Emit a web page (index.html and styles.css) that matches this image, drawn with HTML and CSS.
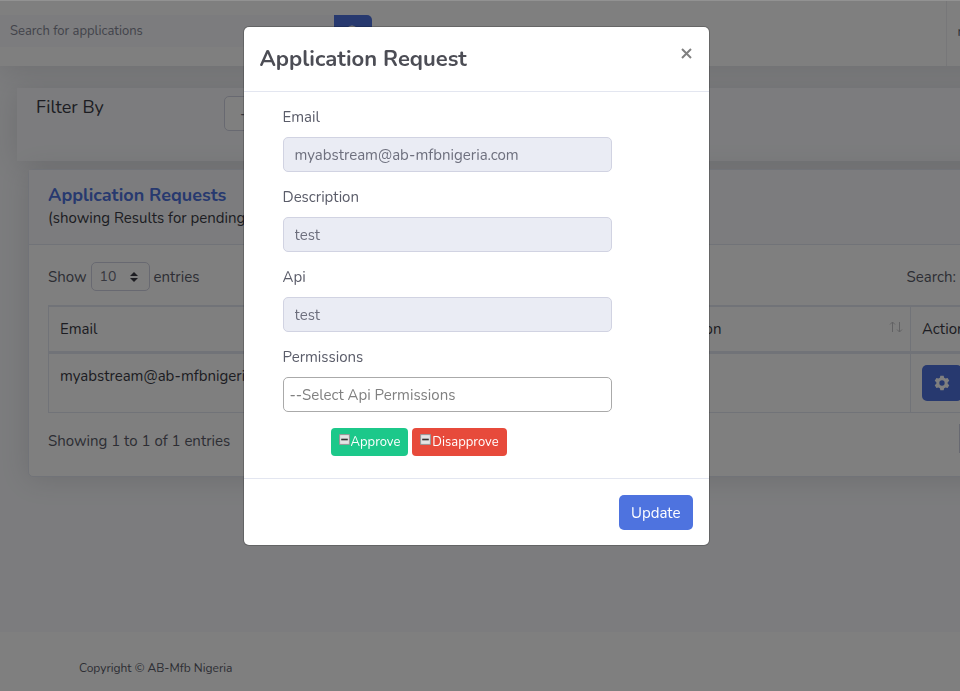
FILE: index.html
```html
<!DOCTYPE html>
<html lang="en">
<head>
<meta charset="utf-8">
<title>Application Requests</title>
<link rel="stylesheet" href="styles.css">
</head>
<body>
<div class="page">
  <header class="topbar">
    <form class="search">
      <input class="search-input" type="text" placeholder="Search for applications" aria-label="Search for applications">
      <button class="search-btn" type="button" aria-label="Search">
        <svg width="14" height="14" viewBox="0 0 14 14" fill="none" stroke="#fff" stroke-width="2" stroke-linecap="round"><circle cx="6" cy="6" r="4.5"/><path d="M9.5 9.5 13 13"/></svg>
      </button>
    </form>
    <div class="user">m</div>
  </header>
  <main class="content">
    <section class="filter">
      <h2 class="filter-title">Filter By</h2>
      <select class="filter-select" aria-label="Filter by"><option>--Select--</option></select>
    </section>
    <section class="card">
      <div class="card-head">
        <h1 class="card-title">Application Requests</h1>
        <div class="card-sub">(showing Results for pending)</div>
      </div>
      <div class="card-body">
        <div class="tools">
          <div class="length">
            <label for="len">Show</label>
            <span class="len-wrap">
              <select id="len" class="len-select"><option>10</option></select>
              <svg class="len-arrows" width="8" height="10" viewBox="0 0 8 10" fill="#3a3b45"><path d="M4 0 8 4H0zM0 6h8l-4 4z"/></svg>
            </span>
            <span>entries</span>
          </div>
          <div class="find"><label for="find">Search:</label><input id="find" class="find-input" type="search"></div>
        </div>
        <table class="table">
          <colgroup><col class="col-email"><col class="col-api"><col class="col-desc"><col></colgroup>
          <thead>
            <tr><th>Email</th><th>Api</th><th><div class="th-sort"><span>Description</span>
              <svg width="14" height="12" viewBox="0 0 14 12" fill="none" stroke="#c4c4c8"><path d="M3.500 11V1M1 3.500 3.500 1 6 3.500M10.500 1v10M8 8.500 10.500 11 13 8.500"/></svg></div></th><th>Action</th></tr>
          </thead>
          <tbody>
            <tr><td>myabstream@ab-mfbnigeria.com</td><td>test</td><td>test</td><td>
              <button class="gear" type="button" aria-label="Settings"><svg width="16" height="16" viewBox="0 0 24 24" fill="#fff"><path fill-rule="evenodd" d="M9.500 1h5l.7 3.200 2 1.200 3.200-1 2.500 4.300-2.400 2.200v2.200l2.400 2.200-2.500 4.300-3.200-1-2 1.200-.7 3.200h-5l-.7-3.200-2-1.200-3.200 1-2.500-4.300 2.400-2.200v-2.200L1.100 8.700l2.500-4.300 3.200 1 2-1.200zM12 8a4 4 0 1 0 0 8 4 4 0 0 0 0-8z"/></svg></button>
            </td></tr>
          </tbody>
        </table>
        <div class="foot">
          <div>Showing 1 to 1 of 1 entries</div>
          <button class="pager" type="button">Previous</button>
        </div>
      </div>
    </section>
  </main>
  <footer class="footer">Copyright © AB-Mfb Nigeria</footer>
</div>
<div class="backdrop">
  <div class="modal" role="dialog" aria-modal="true" aria-labelledby="modal-title">
    <div class="modal-head">
      <h2 class="modal-title" id="modal-title">Application Request</h2>
      <button class="close" type="button" aria-label="Close"><svg width="11" height="11" viewBox="0 0 11 11" fill="none" stroke="#808080" stroke-width="2"><path d="m1 1 9 9M10 1l-9 9"/></svg></button>
    </div>
    <form class="modal-body">
      <div class="group"><label for="email">Email</label><input class="field" id="email" type="text" value="myabstream@ab-mfbnigeria.com" readonly></div>
      <div class="group"><label for="desc">Description</label><input class="field" id="desc" type="text" value="test" readonly></div>
      <div class="group"><label for="api">Api</label><input class="field" id="api" type="text" value="test" readonly></div>
      <div class="group"><label for="perm">Permissions</label><input class="field field-select" id="perm" type="text" placeholder="--Select Api Permissions"></div>
      <div class="decide">
        <button class="small approve" type="button"><svg class="minus" width="11" height="11" viewBox="0 0 10 10"><rect width="10" height="10" rx="1" fill="#999"/><rect x="1" y="1" width="8" height="8" fill="#e4e4e4"/><path d="M2 5h6" stroke="#333" stroke-width="1.500"/></svg>Approve</button>
        <button class="small reject" type="button"><svg class="minus" width="11" height="11" viewBox="0 0 10 10"><rect width="10" height="10" rx="1" fill="#999"/><rect x="1" y="1" width="8" height="8" fill="#e4e4e4"/><path d="M2 5h6" stroke="#333" stroke-width="1.500"/></svg>Disapprove</button>
      </div>
    </form>
    <div class="modal-foot"><button class="update" type="button">Update</button></div>
  </div>
</div>
</body>
</html>
```
FILE: styles.css
```css
* { box-sizing: border-box; }
body {
  margin: 0;
  overflow: hidden;
  background: #f8f9fc;
  color: #5a5c69;
  font: 15px/24px Nunito, Lato, sans-serif;
}
h1, h2 { margin: 0; font-weight: 400; }
button, input, select { font: inherit; margin: 0; }
button { border: 0; padding: 0; color: #fff; }

.page { display: flex; flex-direction: column; width: 116%; min-height: 100vh; }
.topbar {
  display: flex;
  height: 66px;
  background: #fff;
  box-shadow: 0 2px 28px rgba(58, 59, 69, .15);
}
.search { display: flex; width: 372px; height: 32px; margin-top: 15px; }
.search-input {
  flex: 1;
  min-width: 0;
  padding: 0 10px;
  border: 0;
  background: #f8f9fc;
  font-size: 13px;
}
.search-input::placeholder { color: #858796; opacity: 1; }
.search-btn { width: 38px; border-radius: 0 5px 5px 0; background: #4e73df; }
.search-btn svg { display: block; margin: 10px auto; }
.user {
  width: 168px;
  margin-left: auto;
  padding: 20px 11px;
  border-left: 1px solid #eeeef2;
  font-size: 13px;
}
.content { flex: 1; padding: 22px 0 32px 17px; }
.filter {
  display: flex;
  gap: 120px;
  height: 73px;
  padding: 8px 19px;
  background: #f8f9fc;
  box-shadow: 0 2px 28px rgba(58, 59, 69, .15);
}
.filter-title { width: 68px; font-size: 18px; line-height: 22px; color: #3a3b45; white-space: nowrap; }
.filter-select {
  width: 280px;
  height: 35px;
  padding: 0 15px;
  appearance: none;
  border: 1px solid #d1d3e2;
  border-radius: 5px;
  background: #fff;
  color: #6e707e;
}
.card {
  margin: 8px 28px 0 11px;
  border: 1px solid #e3e6f0;
  border-radius: 5px;
  background: #fff;
  box-shadow: 0 2px 28px rgba(58, 59, 69, .15);
}
.card-head {
  padding: 13px 19px 15px;
  border-bottom: 1px solid #e3e6f0;
  background: #f8f9fc;
  color: #3a3b45;
}
.card-title { font-size: 18px; line-height: 24px; font-weight: 700; color: #4e73df; }
.card-sub { line-height: 22px; }
.card-body { padding: 17px 19px 23px; }
.tools { display: flex; justify-content: space-between; height: 43px; }
.length, .find { display: flex; align-items: center; gap: 4px; height: 29px; }
.find { width: 159px; }
.find-input { flex: 1; min-width: 0; height: 29px; margin-left: 4px; border: 1px solid #d1d3e2; border-radius: 4px; }
.len-wrap { position: relative; display: flex; }
.len-select {
  width: 59px;
  height: 29px;
  padding: 0 8px;
  appearance: none;
  border: 1px solid #d1d3e2;
  border-radius: 5px;
  background: #fff;
  color: #6e707e;
  font-size: 14px;
}
.len-arrows { position: absolute; right: 12px; top: 10px; }
.table { width: 100%; table-layout: fixed; border-collapse: collapse; color: #3a3b45; line-height: 22px; }
.col-email { width: 285px; }
.col-api { width: 300px; }
.col-desc { width: 277px; }
.table th, .table td {
  padding: 11px;
  border: 1px solid #e3e6f0;
  text-align: left;
  vertical-align: top;
  font-weight: 400;
}
.table th { border-top-width: 2px; border-bottom-width: 3px; }
.th-sort { display: flex; justify-content: space-between; margin-right: -4px; }
.th-sort svg { margin-top: 3px; }
.gear { display: block; width: 40px; height: 36px; border-radius: 5px; background: #4e73df; }
.gear svg { display: block; margin: 0 auto; }
.foot { display: flex; justify-content: space-between; padding-top: 16px; }
.pager { width: 107px; height: 29px; margin-top: -5px; border: 1px solid #d1d3e2; background: #fff; color: #858796; }
.footer { height: 59px; padding: 24px 79px; background: #fff; font-size: 12px; line-height: 24px; }

.backdrop {
  position: fixed;
  inset: 0;
  overflow: auto;
  padding: 26px 8px 26px 0;
  border-top: 1px solid #929292;
  background: rgba(0, 0, 0, .5);
}
.modal {
  max-width: 465px;
  margin: 0 auto;
  border-radius: 5px;
  background: #fff;
  box-shadow: 0 0 0 1px rgba(0, 0, 0, .2);
}
.modal-head {
  display: flex;
  justify-content: space-between;
  padding: 15px 16px;
  border-bottom: 1px solid #e3e6f0;
}
.modal-title { font-size: 22px; line-height: 34px; font-weight: 700; color: #4c4d55; }
.close { display: block; align-self: flex-start; padding: 6px 1px; background: none; }
.close svg { display: block; }
.modal-body { padding: 13px 97px 22px 39px; }
.group { margin-bottom: 13px; }
.group label { display: block; margin-bottom: 8px; }
.field {
  display: block;
  width: 100%;
  height: 35px;
  padding: 0 11px;
  border: 1px solid #d1d3e2;
  border-radius: 5px;
  background: #eaecf4;
  color: #6e707e;
}
.field-select { padding: 0 6px; border-color: #aaa; background: #fff; }
.field-select::placeholder { color: #808080; opacity: 1; }
.decide { display: flex; gap: 4px; padding: 3px 0 0 48px; }
.small { display: flex; height: 28px; padding: 2px 8px; border-radius: 4px; font-size: 13px; line-height: 24px; }
.minus { flex: none; margin: 4px 1px 0 0; }
.approve { background: #1cc88a; }
.reject { background: #e74a3b; }
.modal-foot { display: flex; justify-content: flex-end; padding: 16px 16px 15px; border-top: 1px solid #e3e6f0; }
.update { height: 35px; padding: 0 12px; border-radius: 5px; background: #4e73df; }
```
